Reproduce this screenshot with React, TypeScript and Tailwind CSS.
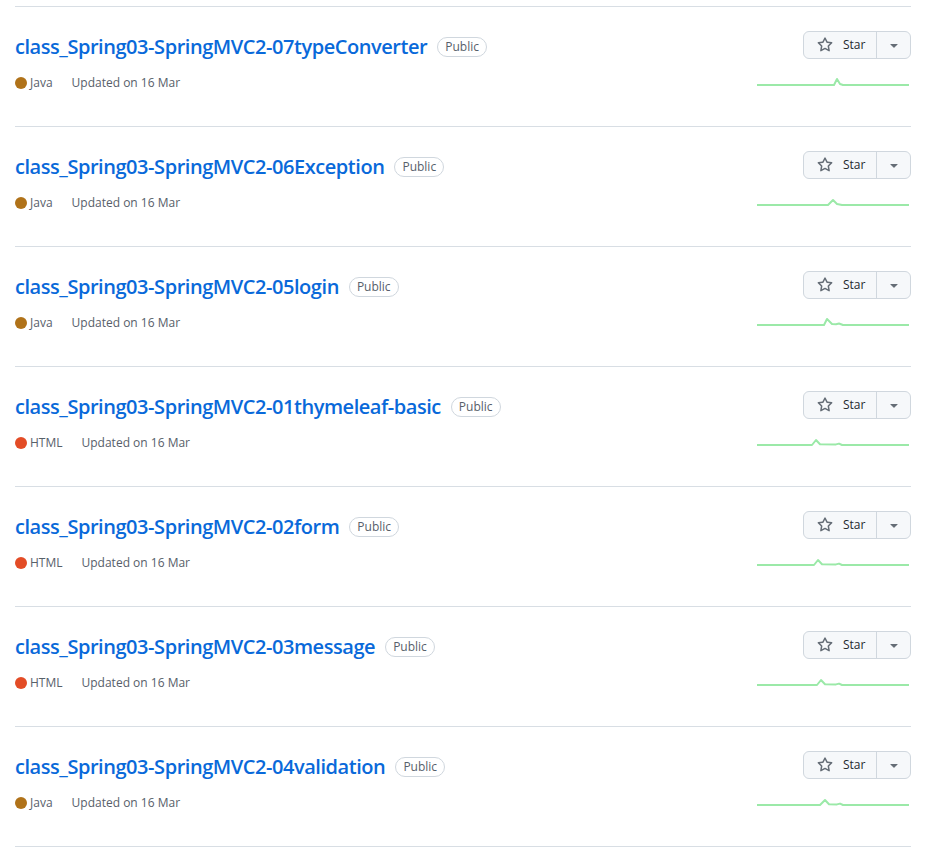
import React from "react";

interface Repo {
  name: string;
  lang: "Java" | "HTML";
  spark: number[][];
}

const langColor: Record<string, string> = {
  Java: "bg-[#b07219]",
  HTML: "bg-[#e34c26]",
};

const repos: Repo[] = [
  {
    name: "class_Spring03-SpringMVC2-07typeConverter",
    lang: "Java",
    spark: [[78, 10], [81, 4], [84, 9], [87, 10]],
  },
  {
    name: "class_Spring03-SpringMVC2-06Exception",
    lang: "Java",
    spark: [[72, 10], [77, 5], [81, 9], [86, 10]],
  },
  {
    name: "class_Spring03-SpringMVC2-05login",
    lang: "Java",
    spark: [[68, 10], [71, 4], [76, 9], [80, 9.2], [83, 8.5], [87, 10]],
  },
  {
    name: "class_Spring03-SpringMVC2-01thymeleaf-basic",
    lang: "HTML",
    spark: [[56, 10], [60, 5], [64, 9.2], [80, 9.4], [83, 8.6], [86, 10]],
  },
  {
    name: "class_Spring03-SpringMVC2-02form",
    lang: "HTML",
    spark: [[58, 10], [62, 5], [66, 9.2], [80, 9.4], [83, 8.6], [86, 10]],
  },
  {
    name: "class_Spring03-SpringMVC2-03message",
    lang: "HTML",
    spark: [[61, 10], [65, 5], [69, 9.2], [80, 9.4], [83, 8.6], [86, 10]],
  },
  {
    name: "class_Spring03-SpringMVC2-04validation",
    lang: "Java",
    spark: [[64, 10], [69, 5], [73, 9.2], [81, 9.4], [84, 8.6], [87, 10]],
  },
];

const StarIcon = () => (
  <svg viewBox="0 0 16 16" width="16" height="16" className="fill-[#656d76]">
    <path d="M8 .25a.75.75 0 0 1 .673.418l1.882 3.815 4.21.612a.75.75 0 0 1 .416 1.279l-3.046 2.97.719 4.192a.751.751 0 0 1-1.088.791L8 12.347l-3.766 1.98a.75.75 0 0 1-1.088-.79l.72-4.194L.818 6.374a.75.75 0 0 1 .416-1.28l4.21-.611L7.327.668A.75.75 0 0 1 8 .25Zm0 2.445L6.615 5.5a.75.75 0 0 1-.564.41l-3.097.45 2.24 2.184a.75.75 0 0 1 .216.664l-.528 3.084 2.769-1.456a.75.75 0 0 1 .698 0l2.77 1.456-.53-3.084a.75.75 0 0 1 .216-.664l2.24-2.183-3.096-.45a.75.75 0 0 1-.564-.41L8 2.694Z" />
  </svg>
);

const CaretIcon = () => (
  <svg viewBox="0 0 16 16" width="16" height="16" className="fill-[#656d76]">
    <path d="m4.427 7.427 3.396 3.396a.25.25 0 0 0 .354 0l3.396-3.396A.25.25 0 0 0 11.396 7H4.604a.25.25 0 0 0-.177.427Z" />
  </svg>
);

const Sparkline = ({ spark }: { spark: number[][] }) => {
  const pts = [[1, 10], ...spark, [153, 10]].map((p) => p.join(",")).join(" ");
  return (
    <svg width="155" height="14" viewBox="0 0 155 14" className="mt-[16px]">
      <polyline
        points={pts}
        fill="none"
        stroke="#9be9a8"
        strokeWidth="2"
        strokeLinejoin="round"
      />
    </svg>
  );
};

const RepoRow = ({ repo }: { repo: Repo }) => (
  <div className="flex h-[120px] justify-between border-b border-[#d8dee4] pt-6">
    <div className="flex flex-col pt-px">
      <div className="flex h-[30px] items-center">
        <a className="text-[20px] font-semibold tracking-[-0.45px] text-[#0969da]">
          {repo.name}
        </a>
        <span className="ml-[10px] rounded-full border border-[#d0d7de] px-[7px] text-[12px] leading-[18px] font-medium text-[#57606a]">
          Public
        </span>
      </div>
      <div className="mt-[12px] flex items-center text-[12px] leading-[18px] text-[#57606a]">
        <span className={`h-3 w-3 rounded-full ${langColor[repo.lang]}`} />
        <span className="ml-[3px] mr-[19px]">{repo.lang}</span>
        <span>Updated on 16 Mar</span>
      </div>
    </div>
    <div className="flex flex-col items-end">
      <div className="flex h-7 rounded-md border border-[#d0d7de] bg-[#f6f8fa] text-[12px] font-medium text-[#24292f]">
        <button className="flex w-[73px] items-center gap-[10px] border-r border-[#d0d7de] pl-[13px]">
          <StarIcon />
          <span>Star</span>
        </button>
        <button className="flex w-[33px] items-center justify-center">
          <CaretIcon />
        </button>
      </div>
      <Sparkline spark={repo.spark} />
    </div>
  </div>
);

export default function App() {
  return (
    <div className="min-h-[867px] bg-white font-['Open_Sans',sans-serif]">
      <div className="ml-[15px] w-[896px] pt-[6px]">
        <div className="border-t border-[#d8dee4]">
          {repos.map((r) => (
            <RepoRow key={r.name} repo={r} />
          ))}
        </div>
      </div>
    </div>
  );
}
